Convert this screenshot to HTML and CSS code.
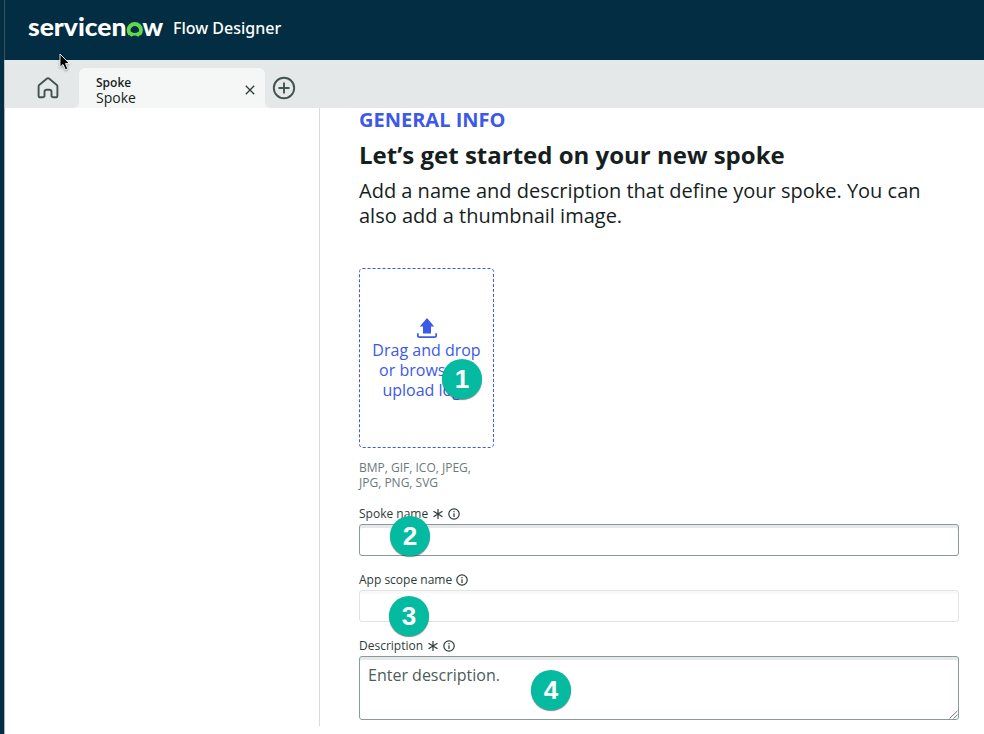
FILE: index.html
```html
<!DOCTYPE html>
<html lang="en">
<head>
<meta charset="utf-8">
<title>Flow Designer</title>
<link rel="stylesheet" href="styles.css">
</head>
<body>
<div class="app">
  <header class="header">
    <svg class="logo" width="138" height="40" viewBox="0 -5 138 40" role="img" aria-label="servicenow">
      <text class="logo-text" x="0" y="23.3" textLength="98.5" lengthAdjust="spacingAndGlyphs">servicen</text>
      <path d="M102.2 21.2A6.1 6.1 0 1 1 111.4 21.2" fill="none" stroke="#62d84e" stroke-width="4"/>
      <path d="M100.4 21.2L103.4 23.7Q106.8 21.2 110.2 23.7L113.2 21.2L110.4 18.8Q106.8 21.4 103.2 18.8Z" fill="#62d84e"/>
      <text class="logo-text" x="114.4" y="23.3" textLength="20.6" lengthAdjust="spacingAndGlyphs">w</text>
    </svg>
    <span class="product">Flow Designer</span>
  </header>
  <nav class="tabs">
    <div class="home">
      <svg width="22" height="22" viewBox="0 0 22 22" fill="none" stroke="#41544f" stroke-width="1.9" stroke-linejoin="round"><path d="M1.6 9.2Q1.6 8.5 2.2 8L10 1.6Q11 .8 12 1.6L19.8 8Q20.4 8.5 20.4 9.2V18.4Q20.4 20.3 18.5 20.3H16.3Q14.5 20.3 14.5 18.5V15Q14.5 12.7 12.2 12.7H9.8Q7.5 12.7 7.5 15V18.5Q7.5 20.3 5.7 20.3H3.5Q1.6 20.3 1.6 18.4Z"/></svg>
    </div>
    <div class="tab">
      <div class="tab-labels"><span class="tab-type">Spoke</span><span class="tab-name">Spoke</span></div>
      <svg class="close" width="10" height="10" viewBox="0 0 10 10" stroke="#2d3b3b" stroke-width="1.3"><path d="M.8.8L9.2 9.2M9.2.8L.8 9.2"/></svg>
    </div>
    <div class="add">
      <svg width="24" height="24" viewBox="0 0 24 24" fill="none" stroke="#41544f" stroke-width="1.9"><circle cx="12" cy="12" r="10.2"/><path d="M12 6.5V17.5M6.5 12H17.5"/></svg>
    </div>
  </nav>
  <div class="body">
    <aside class="sidebar"></aside>
    <main class="main">
      <div class="eyebrow"><span>GENERAL INFO</span></div>
      <h1 class="title">Let’s get started on your new spoke</h1>
      <p class="intro">Add a name and description that define your spoke. You can<br>also add a thumbnail image.</p>
      <div class="drop">
        <svg class="outline" width="135" height="180"><rect x=".5" y=".5" width="134" height="179" rx="3" fill="none" stroke="#3c59e7" stroke-dasharray="3 2"/></svg>
        <svg class="upload" width="20" height="21" viewBox="0 0 20 21"><path d="M10 0L17.2 8.6H14V15.6H6V8.6H2.8Z" fill="#3c59e7"/><path d="M.8 15.2V17.6Q.8 19.2 2.4 19.2H17.6Q19.2 19.2 19.2 17.6V15.2" fill="none" stroke="#3c59e7" stroke-width="1.7"/></svg>
        <div class="drop-text">Drag and drop<br>or browse to<br>upload logo</div>
        <span class="badge badge-1">1</span>
      </div>
      <div class="types">BMP, GIF, ICO, JPEG,<br>JPG, PNG, SVG</div>
      <div class="field">
        <div class="label"><span>Spoke name</span><svg class="star" width="10" height="10" viewBox="0 0 10 10"><path d="M5 0V10M.5 2.2L9.5 7.8M9.5 2.2L.5 7.8"/></svg><svg class="info" width="12" height="12" viewBox="0 0 12 12"><circle cx="6" cy="6" r="5.2"/><path d="M6 5.2V9M6 3V4.2"/></svg></div>
        <div class="input"></div>
        <span class="badge badge-2">2</span>
      </div>
      <div class="field">
        <div class="label"><span>App scope name</span><svg class="info near" width="12" height="12" viewBox="0 0 12 12"><circle cx="6" cy="6" r="5.2"/><path d="M6 5.2V9M6 3V4.2"/></svg></div>
        <div class="input readonly"></div>
        <span class="badge badge-3">3</span>
      </div>
      <div class="field">
        <div class="label"><span>Description</span><svg class="star" width="10" height="10" viewBox="0 0 10 10"><path d="M5 0V10M.5 2.2L9.5 7.8M9.5 2.2L.5 7.8"/></svg><svg class="info" width="12" height="12" viewBox="0 0 12 12"><circle cx="6" cy="6" r="5.2"/><path d="M6 5.2V9M6 3V4.2"/></svg></div>
        <div class="input area">Enter description.<svg class="grip" width="9" height="9" viewBox="0 0 9 9" stroke="#666" stroke-width=".9"><path d="M.5 8.5L8.5 .8M4.5 8.5L8.5 4.7"/></svg></div>
        <span class="badge badge-4">4</span>
      </div>
    </main>
  </div>
  <svg class="cursor" width="14" height="20" viewBox="0 0 14 20"><path d="M1 1V14.2L4 11.5L6.4 16.8L8.8 15.7L6.5 10.6H10.5Z" fill="#000" stroke="#fff" stroke-width=".9"/></svg>
</div>
</body>
</html>
```
FILE: styles.css
```css
* { box-sizing: border-box; }
body { margin: 0; font-family: "Open Sans", "Noto Sans", sans-serif; color: #161e1e; background: #fff; }
.app { position: relative; height: 734px; overflow: hidden; border-left: 4px solid #032d42; display: flex; flex-direction: column; }
.header { height: 60px; flex: none; display: flex; align-items: center; background: #032d42; border-left: 1px solid #3b5260; padding: 0 0 4px 23px; }
.logo { flex: none; }
.logo-text { font: 900 25px Lato, sans-serif; fill: #fff; }
.product { color: #fff; font-family: "Noto Sans", sans-serif; font-size: 16px; font-weight: 500; margin-left: 7px; white-space: nowrap; }
.tabs { height: 48px; flex: none; display: flex; background: #f5f7f7; border-left: 1px solid #b9c2c7; }
.home { width: 74px; background: #e4e8e8; border-radius: 0 0 6px 0; padding: 17px 0 0 32px; }
.tab { width: 186px; background: #e4e8e8; display: flex; position: relative; padding: 15px 10px 0 17px; justify-content: space-between; z-index: 0; }
.tab::before { content: ""; position: absolute; inset: 8px 0 0; background: #f5f7f7; border-radius: 6px 6px 0 0; z-index: -1; }
.tab-labels { display: flex; flex-direction: column; }
.tab-type { font-size: 12px; line-height: 15px; font-weight: 600; }
.tab-name { font-size: 14px; line-height: 15px; }
.close { margin-top: 10px; }
.add { flex: 1; background: #e4e8e8; border-radius: 0 0 0 6px; padding: 16px 0 0 7px; }
.body { flex: 1; display: flex; border-left: 1px solid #aab3b8; }
.sidebar { width: 315px; height: 618px; border-right: 1px solid #d5dcdc; flex: none; }
.main { width: 600px; margin-left: 39px; }
.eyebrow { font-size: 20px; line-height: 23px; font-weight: 700; color: #3c59e7; }
.title { font-size: 24px; line-height: 30px; font-weight: 700; margin: 9px 0 0; white-space: nowrap; }
.intro { font-size: 20px; line-height: 25px; margin: 8px 0 0; white-space: nowrap; }
.drop { position: relative; width: 135px; height: 180px; margin-top: 40px; padding-top: 50px; display: flex; flex-direction: column; align-items: center; color: #3c59e7; }
.outline { position: absolute; inset: 0; }
.upload { flex: none; }
.drop-text { font-size: 16px; line-height: 20px; text-align: center; white-space: nowrap; margin-top: 1px; }
.types { font-size: 12px; line-height: 15px; color: #6a7a7a; margin-top: 12px; }
.field { position: relative; margin-top: 16px; }
.label { height: 16px; display: flex; align-items: center; font-size: 12px; line-height: 16px; color: #2d3b3b; margin-bottom: 2px; white-space: nowrap; }
.star, .info { fill: none; stroke: #2d3b3b; stroke-width: 1.2; margin-left: 5px; flex: none; }
.info { position: relative; top: -.5px; }
.info.near { margin-left: 4px; }
.input { width: 600px; height: 32px; border: 1px solid #8a9999; border-radius: 3px; box-shadow: inset 0 3px #e6e8e9; }
.readonly { border-color: #e1e4e4; box-shadow: inset 0 3px #f8f9f9; }
.area { position: relative; height: 64px; padding: 8px; font-size: 16px; line-height: 20px; color: #4c5b5b; }
.grip { position: absolute; right: 0; bottom: 0; }
.badge { position: absolute; width: 40px; height: 40px; border-radius: 50%; background: #04bba2; color: #fff; font: 700 26px/41px "Liberation Sans", sans-serif; text-align: center; box-shadow: 0 1px 1px rgba(0,40,40,.55); }
.badge-1 { left: 83px; top: 91px; }
.badge-2 { left: 31px; top: 10px; }
.badge-3 { left: 30px; top: 24px; }
.badge-4 { left: 172px; top: 32px; }
.cursor { position: absolute; left: 55px; top: 53px; filter: drop-shadow(0 1px 1px rgba(0,0,0,.35)); }
```
